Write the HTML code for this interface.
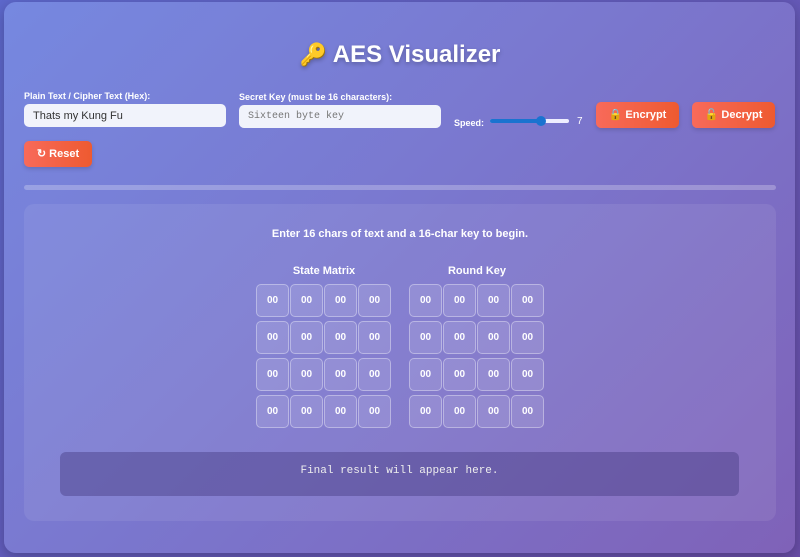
<!DOCTYPE html>
<html><head><meta charset="utf-8"><style>
*{box-sizing:border-box;margin:0;padding:0}
html,body{width:800px;height:557px;overflow:hidden}
body{background:linear-gradient(135deg,#5d68cc,#6a4ea8);font-family:"Liberation Sans",sans-serif;position:relative}
.box{position:absolute;left:4px;top:2px;width:791px;height:551px;border-radius:12px;background:linear-gradient(135deg,#7688e0 0%,#7a78cf 45%,#7f62b8 100%);box-shadow:0 4px 14px rgba(0,0,0,.25)}
h1{position:absolute;left:0;width:800px;top:41px;text-align:center;color:#fff;font-size:24px;font-weight:bold;text-shadow:0 2px 4px rgba(0,0,0,.25)}
.lbl{position:absolute;color:#fff;font-size:9px;font-weight:bold}
.in{position:absolute;height:23px;background:#f1f3fb;border-radius:5px;font-size:11px;padding:6px 9px;color:#333}
.btn{position:absolute;height:26px;border-radius:5px;background:linear-gradient(90deg,#f86a5a,#ee5a30);color:#fff;font-size:11px;font-weight:bold;text-align:center;line-height:26px;box-shadow:0 2px 4px rgba(0,0,0,.15)}
.bar{position:absolute;left:24px;top:185px;width:752px;height:5px;border-radius:3px;background:rgba(255,255,255,.25)}
.panel{position:absolute;left:24px;top:204px;width:752px;height:317px;border-radius:10px;background:rgba(255,255,255,.08)}
.t{position:absolute;color:#fff;font-weight:bold;text-align:center}
.grid{position:absolute;display:grid;grid-template-columns:repeat(4,33px);grid-auto-rows:33px;column-gap:1px;row-gap:4px}
.grid div{border:1px solid rgba(255,255,255,.35);border-radius:5px;background:rgba(255,255,255,.12);color:#fff;font-size:10px;font-weight:bold;text-align:center;line-height:31px}
.res{position:absolute;left:60px;top:452px;width:679px;height:44px;border-radius:6px;background:rgba(70,60,130,.45);color:#eee;font-family:"Liberation Mono",monospace;font-size:11px;text-align:center;line-height:38px}
</style></head><body>
<div class="box"></div>
<h1><span style="font-size:22px">🔑</span> AES Visualizer</h1>
<div class="lbl" style="left:24px;top:91px">Plain Text / Cipher Text (Hex):</div>
<div class="in" style="left:24px;top:104px;width:202px">Thats my Kung Fu</div>
<div class="lbl" style="left:239px;top:92px">Secret Key (must be 16 characters):</div>
<div class="in" style="left:239px;top:105px;width:202px;font-family:'Liberation Mono',monospace;color:#777;font-size:10px">Sixteen byte key</div>
<div class="lbl" style="left:454px;top:118px">Speed:</div>
<div style="position:absolute;left:490px;top:119px;width:79px;height:4px;border-radius:2px;background:#eef"></div>
<div style="position:absolute;left:490px;top:119px;width:52px;height:4px;border-radius:2px;background:#1a73d0"></div>
<div style="position:absolute;left:536px;top:116px;width:10px;height:10px;border-radius:5px;background:#1a73d0"></div>
<div style="position:absolute;left:577px;top:116px;color:#fff;font-size:10px">7</div>
<div class="btn" style="left:596px;top:102px;width:83px">🔒 Encrypt</div>
<div class="btn" style="left:692px;top:102px;width:83px">🔓 Decrypt</div>
<div class="btn" style="left:24px;top:141px;width:68px">↻ Reset</div>
<div class="bar"></div>
<div class="panel"></div>
<div class="t" style="left:0;width:800px;top:228px;font-size:11px">Enter 16 chars of text and a 16-char key to begin.</div>
<div class="t" style="left:256px;width:136px;top:265px;font-size:11px">State Matrix</div>
<div class="t" style="left:409px;width:136px;top:265px;font-size:11px">Round Key</div>
<div class="grid" style="left:256px;top:284px"><div>00</div><div>00</div><div>00</div><div>00</div><div>00</div><div>00</div><div>00</div><div>00</div><div>00</div><div>00</div><div>00</div><div>00</div><div>00</div><div>00</div><div>00</div><div>00</div></div>
<div class="grid" style="left:409px;top:284px"><div>00</div><div>00</div><div>00</div><div>00</div><div>00</div><div>00</div><div>00</div><div>00</div><div>00</div><div>00</div><div>00</div><div>00</div><div>00</div><div>00</div><div>00</div><div>00</div></div>
<div class="res">Final result will appear here.</div>
</body></html>
